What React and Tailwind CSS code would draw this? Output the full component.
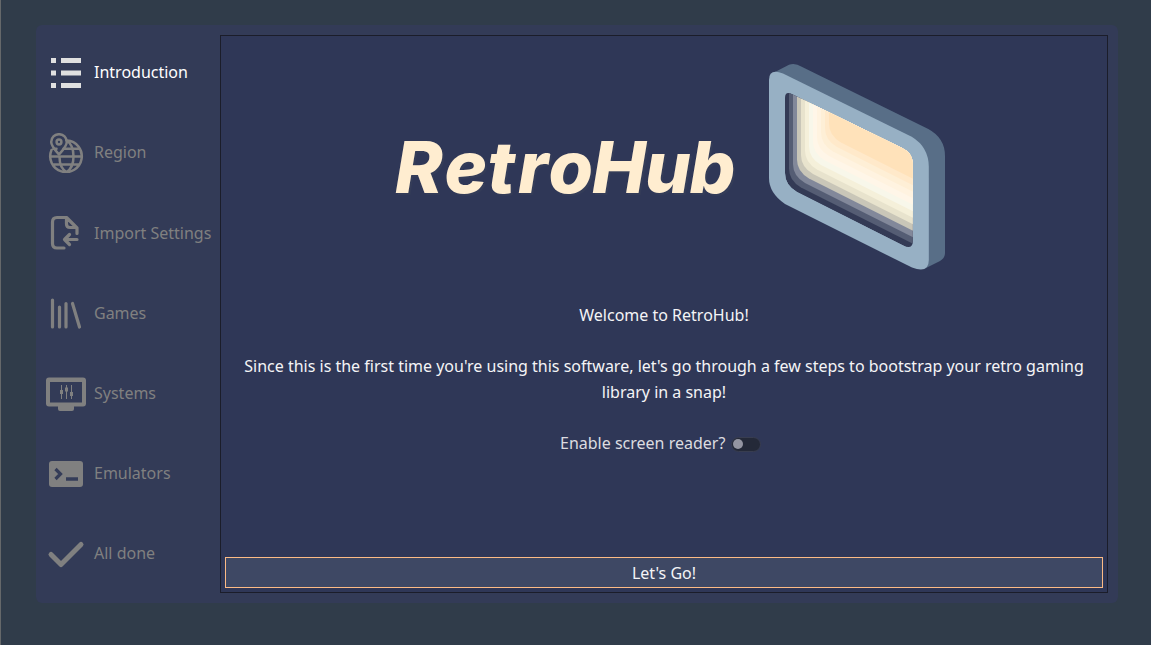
const bands = [
  ['#333a55', 0], ['#555d74', 1], ['#82889a', 2], ['#c9c6b8', 3], ['#e8e3cd', 4],
  ['#f5f0da', 5], ['#f8f7ea', 6], ['#fff6e8', 7], ['#fff3e0', 8], ['#feefd6', 9], ['#ffe9ca', 10], ['#ffe2ba', 11],
];
const hole = 'M785 98 Q785 91 791.7 94 L901.7 147.7 Q912.8 153 912.8 163 L912.8 241 Q912.8 250 903 245.5 L797 192 Q785 185 785 173 Z';

function Logo() {
  return (
    <svg className="block h-[216px] w-[560px]" viewBox="390 60 560 216">
      <text x="395 444.500 487.500 518 548.500 592 645 689.500" y="193" fill="#ffedd0" className="font-['Inter'] text-[72px] font-extrabold italic drop-shadow-[2px_2px_0_#343c58]">RetroHub</text>
      <path fill="#586e87" d="M774 72.5 L789 64.8 Q795 62.5 801.7 66.7 L928.3 129 Q945 138 945 156 L945 253 Q945 258 940 261 L925 268.6 L900 200 L800 90 Z" />
      <path fill="#97b0c4" d="M769 80 Q769 68 783 73.5 L911.7 136.7 Q928.8 147 928.8 167 L928.8 260 Q928.8 274 912 267.6 L785 204 Q769 193 769 178 Z" />
      <clipPath id="hole"><path d={hole} /></clipPath>
      <g clipPath="url(#hole)">
        {bands.map(([fill, n]) => (
          <path key={n} fill={fill} d={`M${785 + n * 4} 60 L${785 + n * 4} ${173 - n * 4.5} Q${785 + n * 4} ${185 - n * 4.5} ${797 + n * 4} ${192 - n * 4.5} L${950 + n * 4} ${269 - n * 4.5} V60 Z`} />
        ))}
      </g>
    </svg>
  );
}

const stroke = { fill: 'none', stroke: 'currentColor', strokeLinecap: 'round', strokeLinejoin: 'round' };
const icons = {
  intro: <path fill="currentColor" d="M5 5h5v5H5zM15 5h20v5H15zM5 17.5h5v5H5zM15 17.5h20v5H15zM5 30h5v5H5zM15 30h20v5H15z" />,
  region: (
    <g {...stroke} strokeWidth="2.5">
      <path d="M21 7.5A15.8 15.8 0 1 1 5.5 17M4.5 23.5h31M7.5 15.8h3M17.5 15.8h16M7 31.5h26M20.5 39c-5-3-7-9-7-15M20.5 39c5-3 7-9 7-15.5s-2-13-7-16" />
      <path d="M13 21.5C9 17 5.2 13 5.2 9a7.8 7.8 0 0 1 15.6 0c0 4-3.800 8-7.800 12.500z" />
      <circle cx="13" cy="9" r="2.4" />
    </g>
  ),
  importer: <path {...stroke} strokeWidth="3.2" d="M18 35H11Q6.500 35 6.500 30.500V9Q6.500 4.500 11 4.500H20.500L31 15V20.500M20.500 5V11Q20.500 14.500 24 14.500H30M31 26.500H19M23.500 21.500L18.500 26.500L23.500 31.500" />,
  games: <path {...stroke} strokeWidth="3.2" d="M6.500 6V33M13.500 13V33M20 9.500V33M26.500 9.500L33.500 33" />,
  systems: (
    <>
      <path fill="currentColor" fillRule="evenodd" d="M3 3.500H37Q40 3.500 40 6.500V29.500Q40 32.500 37 32.500H28V35Q28 37 26 37H14Q12 37 12 35V32.500H3Q0 32.500 0 29.500V6.500Q0 3.500 3 3.500ZM4 8V28.500H36V8Z" />
      <path stroke="currentColor" strokeWidth="1" d="M15.500 11V25M20.500 11V25M25.500 11V25" />
      <path fill="currentColor" d="M14 16h3v4h-3zM19 13.500h3v4h-3zM24 18h3v4h-3z" />
    </>
  ),
  emulators: (
    <>
      <rect x="3" y="7" width="34" height="26" rx="3" fill="currentColor" />
      <path d="M9.500 15L14.500 20L9.500 25" fill="none" stroke="#343c58" strokeWidth="3.2" />
      <path d="M20 25H32" stroke="#343c58" strokeWidth="3.5" />
    </>
  ),
  done: <path {...stroke} strokeWidth="5" d="M5 20.500L15 30.500L35 10.500" />,
};

const steps = [
  ['intro', 'Introduction'], ['region', 'Region'], ['importer', 'Import Settings'], ['games', 'Games'],
  ['systems', 'Systems'], ['emulators', 'Emulators'], ['done', 'All done'],
];

export default function App() {
  return (
    <div className="h-[645px] w-[1151px] overflow-hidden border-l border-[#65686a] bg-[#303c4a] pt-[25px] pl-[35px] font-['Noto_Sans',sans-serif] text-base text-[#f4f4f6]">
      <div className="flex h-[578px] w-[1082px] rounded-md bg-[#333b57] pt-[10px]">
        <nav className="flex w-[184px] shrink-0 flex-col gap-[40.200px] pt-[18px] pl-[10px]">
          {steps.map(([id, label], i) => (
            <div key={id} className={`flex h-10 items-center gap-2 whitespace-nowrap ${i === 0 ? 'text-white' : 'text-[#808080]'}`}>
              <svg className={`h-10 w-10 shrink-0 ${i === 0 ? 'text-[#e0e0e0]' : ''}`} viewBox="0 0 40 40">{icons[id]}</svg>
              <span className="pb-[1.500px]">{label}</span>
            </div>
          ))}
        </nav>
        <main className="flex h-[558px] w-[888px] flex-col border border-[#1b1d2a] bg-[#2f3757] p-1 text-center">
          <div className="flex h-[234px] justify-start pt-5 pl-[165px]"><Logo /></div>
          <div className="pt-[29px] leading-[25.600px]">
            <p>Welcome to RetroHub!</p>
            <p className="pt-[25.600px] whitespace-nowrap">Since this is the first time you're using this software, let's go through a few steps to bootstrap your retro gaming<br />library in a snap!</p>
          </div>
          <div className="flex items-center gap-[6px] pt-[26px] pl-[335px] leading-[25.600px] text-[#dcdce0]">
            <span>Enable screen reader?</span>
            <span className="flex h-[15px] w-[30px] items-center rounded-full border border-[#383d50] bg-[#242938] pl-px">
              <span className="h-[10px] w-[10px] rounded-full bg-[#9495a1]" />
            </span>
          </div>
          <button className="mt-auto h-[31px] w-full border border-[#fdbb85] bg-[#3e4864]">Let's Go!</button>
        </main>
      </div>
    </div>
  );
}
